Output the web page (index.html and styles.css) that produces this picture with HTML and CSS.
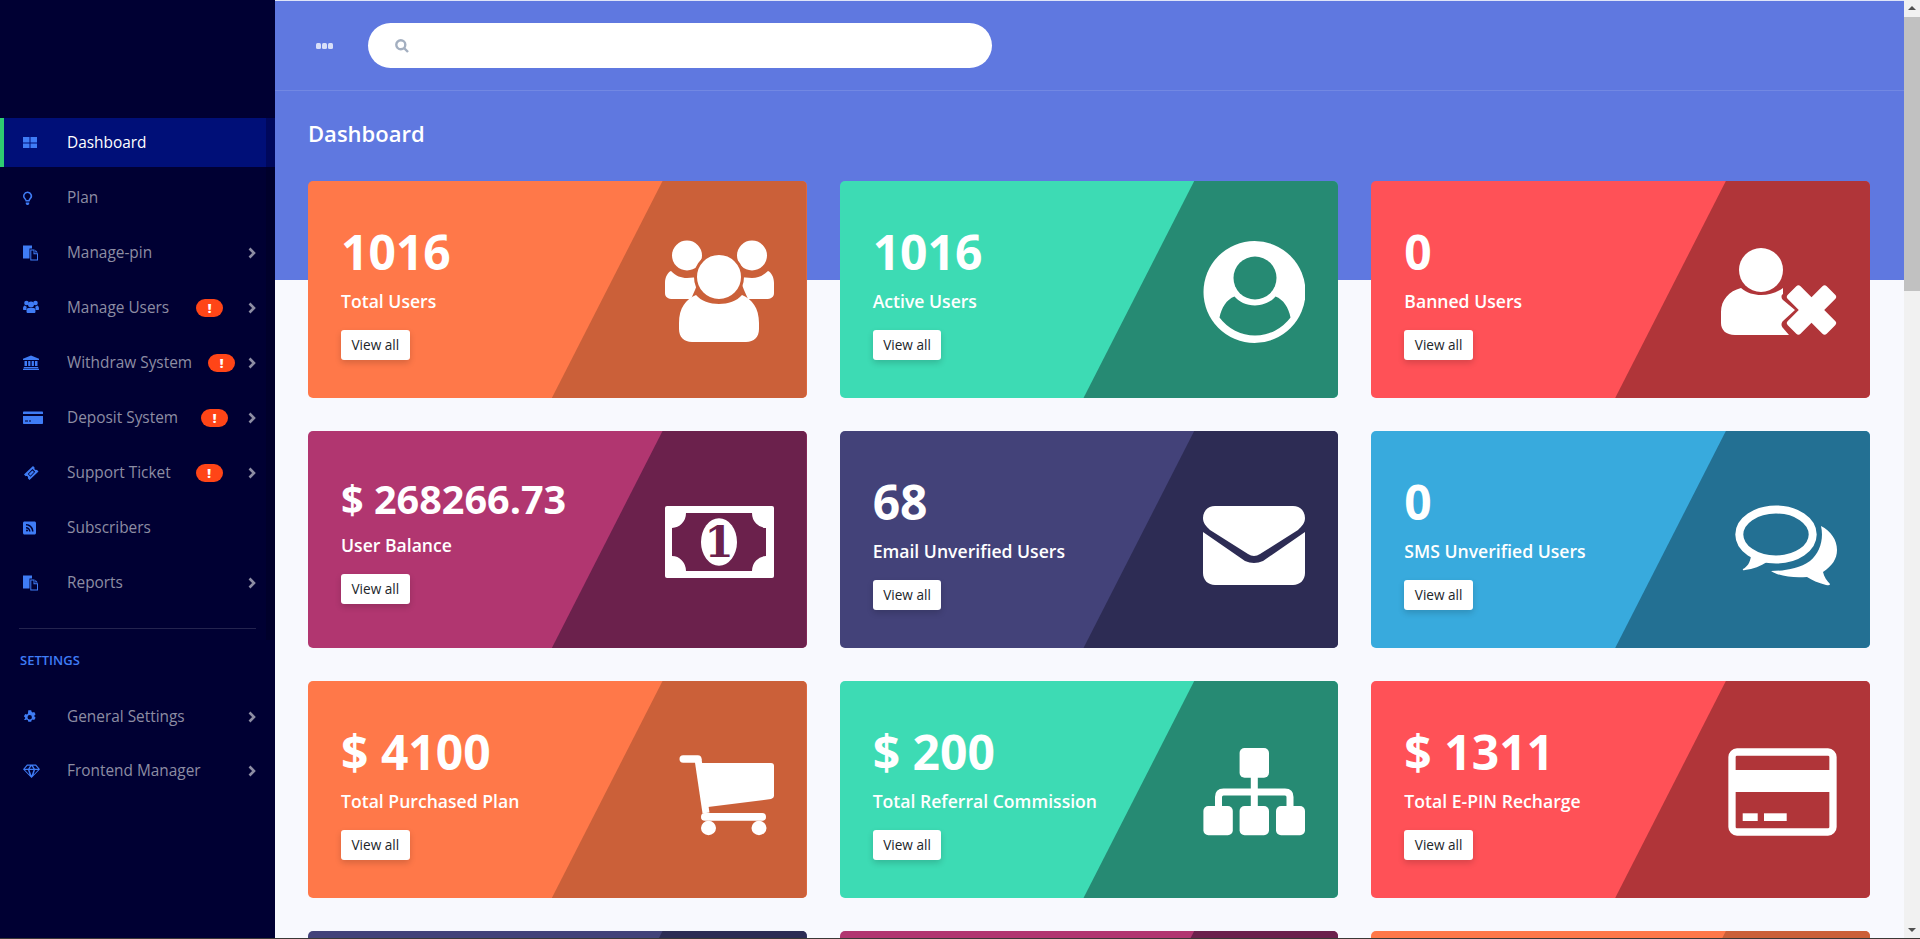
FILE: index.html
```html
<!DOCTYPE html>
<html lang="en">
<head>
  <meta charset="UTF-8" />
  <title>Dashboard</title>
  <meta name="viewport" content="width=device-width, initial-scale=1.0" />
  <link rel="stylesheet" href="styles.css">
</head>
<body>
  <div class="sidebar">
    <div class="menu">
      <a class="menu-item active">
        <svg class="menu-icon" viewBox="0 0 20 20"><path d="M0 4h6.5v5.500H0zM7.500 4H14v5.500H7.500zM0 10.500h6.500V15H0zM7.500 10.500H14V15H7.500z"/></svg>
        <span>Dashboard</span>
      </a>
      <a class="menu-item">
        <svg class="menu-icon" viewBox="0 0 20 20"><path d="M4.500 3.500a4.500 4.500 0 0 0-3.200 7.600c.8.900 1.200 1.700 1.300 2.400h4c.1-.7.500-1.500 1.300-2.400a4.500 4.500 0 0 0-3.400-7.600zm0 1.500a3 3 0 0 1 2.200 5c-.6.700-1 1.300-1.200 2H3.500c-.2-.7-.6-1.300-1.200-2a3 3 0 0 1 2.200-5z"/><path d="M2.800 14.500h3.400v1.200l-.9 1.300H3.700l-.9-1.300z"/></svg>
        <span>Plan</span>
      </a>
      <a class="menu-item">
        <svg class="menu-icon" viewBox="0 0 20 20"><path d="M0 2.500h9v3H6.500v10H0z"/><path d="M7.300 6.500h4.200v3.700h3.500v7.300H7.300zM8.300 7.500v9h5.700v-5.300h-3.500V7.500z"/><path d="M12.300 6.800l2.500 2.600h-2.500z"/></svg>
        <span>Manage-pin</span>
        <svg class="chevron" viewBox="0 0 8 12"><path d="M1.500 1.500L6 6l-4.500 4.500"/></svg>
      </a>
      <a class="menu-item">
        <svg class="menu-icon" viewBox="0 0 20 20"><circle cx="3.500" cy="5" r="2.300"/><circle cx="12.500" cy="5" r="2.300"/><circle cx="8" cy="6.500" r="3"/><path d="M0 11c0-2 .8-3.500 2-3.500.6.500 1 1 1.700 1.200-.3 1-.2 2.300-.2 3.300H1c-.6 0-1-.4-1-1zM16 11c0-2-.8-3.500-2-3.500-.6.500-1 1-1.700 1.200.3 1 .2 2.300.2 3.300H15c.6 0 1-.4 1-1z"/><path d="M5.200 10h5.600c1.200 0 1.700 1.500 1.700 3.500 0 1-.6 1.500-1.500 1.500H5c-.9 0-1.500-.5-1.500-1.500 0-2 .5-3.500 1.700-3.500z"/></svg>
        <span>Manage Users</span>
        <span class="badge badge-users">!</span>
        <svg class="chevron" viewBox="0 0 8 12"><path d="M1.500 1.500L6 6l-4.500 4.500"/></svg>
      </a>
      <a class="menu-item">
        <svg class="menu-icon" viewBox="0 0 20 20"><path d="M8 2.500l8 3.200v1.300H0V5.700z"/><path d="M1.500 8h2.500v5H1.500zM5.200 8h2.200v5H5.200zM8.700 8h2.200v5H8.700zM12 8h2.500v5H12z"/><path d="M.8 14h14.400v1.200H.8zM0 15.700h16v1.300H0z"/></svg>
        <span>Withdraw System</span>
        <span class="badge badge-withdraw">!</span>
        <svg class="chevron" viewBox="0 0 8 12"><path d="M1.500 1.500L6 6l-4.500 4.500"/></svg>
      </a>
      <a class="menu-item">
        <svg class="menu-icon" viewBox="0 0 20 20"><path d="M1 3.500h18c.6 0 1 .4 1 1V6H0V4.500c0-.6.400-1 1-1zM0 8h20v7c0 .6-.4 1-1 1H1c-.6 0-1-.4-1-1zm2 4.500v1h3v-1zm4 0v1h2v-1z" fill-rule="evenodd"/></svg>
        <span>Deposit System</span>
        <span class="badge badge-deposit">!</span>
        <svg class="chevron" viewBox="0 0 8 12"><path d="M1.500 1.500L6 6l-4.500 4.500"/></svg>
      </a>
      <a class="menu-item">
        <svg class="menu-icon" viewBox="0 0 20 20"><path d="M10 3l1.700 1.700c-.4.700-.3 1.400.2 1.900s1.200.6 1.900.2L15.500 8.500 6.500 17l-1.700-1.700c.4-.7.300-1.400-.2-1.900s-1.200-.6-1.900-.2L1 11.500zM9.500 6L4.800 11 7.500 13.700 12.200 8.700z" fill-rule="evenodd"/><path d="M9.400 7.500l1.600 1.600-3.600 3.600-1.600-1.600z"/></svg>
        <span>Support Ticket</span>
        <span class="badge badge-ticket">!</span>
        <svg class="chevron" viewBox="0 0 8 12"><path d="M1.500 1.500L6 6l-4.500 4.500"/></svg>
      </a>
      <a class="menu-item">
        <svg class="menu-icon" viewBox="0 0 20 20"><path fill-rule="evenodd" d="M1.500 3.500h10c.8 0 1.500.7 1.500 1.500v10c0 .8-.7 1.500-1.500 1.500h-10C.7 16.500 0 15.800 0 15V5c0-.8.700-1.500 1.500-1.500zM3 6v1.500c3.300 0 6 2.700 6 6h1.500C10.500 9.300 7.200 6 3 6zm0 3v1.500c1.700 0 3 1.300 3 3h1.500C7.500 11 5.500 9 3 9zm1 2.500a1 1 0 1 0 0 2 1 1 0 0 0 0-2z"/></svg>
        <span>Subscribers</span>
      </a>
      <a class="menu-item">
        <svg class="menu-icon" viewBox="0 0 20 20"><path d="M0 2.500h9v3H6.500v10H0z"/><path d="M7.300 6.500h4.200v3.700h3.500v7.300H7.300zM8.300 7.500v9h5.700v-5.300h-3.500V7.500z"/><path d="M12.300 6.800l2.500 2.600h-2.500z"/></svg>
        <span>Reports</span>
        <svg class="chevron" viewBox="0 0 8 12"><path d="M1.500 1.500L6 6l-4.500 4.500"/></svg>
      </a>
      <div class="menu-divider"></div>
    </div>

    <div class="menu-title">SETTINGS</div>

    <div class="menu menu-settings">
      <a class="menu-item">
        <svg class="menu-icon" viewBox="0 0 20 20"><path fill-rule="evenodd" d="M5.300 3.200h2.900l.4 1.600 1 .6 1.600-.5 1.400 2.400-1.200 1.200v1l1.200 1.200-1.400 2.400-1.600-.5-1 .6-.4 1.600H5.300l-.4-1.600-1-.6-1.600.5L.9 12.700l1.200-1.200v-1L.9 9.300l1.400-2.400 1.600.5 1-.6zM6.700 8a2.200 2.200 0 1 0 0 4.400 2.200 2.200 0 0 0 0-4.400z"/></svg>
        <span>General Settings</span>
        <svg class="chevron" viewBox="0 0 8 12"><path d="M1.500 1.500L6 6l-4.500 4.500"/></svg>
      </a>
      <a class="menu-item">
        <svg class="menu-icon" viewBox="0 0 20 20"><path fill-rule="evenodd" d="M4 3.500h9l4 4.800L8.500 17 0 8.300zM4.500 4.700L1.800 7.800h3.400L7 4.700zM8.500 4.900L6.700 7.800h3.600zM10 4.700l1.800 3.100h3.400l-2.700-3.100zM2 9l4.500 4.800L5 9zM6.500 9l2 5.600L10.500 9zM12 9l-1.500 4.800L15 9z"/></svg>
        <span>Frontend Manager</span>
        <svg class="chevron" viewBox="0 0 8 12"><path d="M1.500 1.500L6 6l-4.500 4.500"/></svg>
      </a>
    </div>
  </div>

  <div class="main">
    <div class="topbar">
      <div class="dots"><i></i><i></i><i></i></div>
      <div class="search">
        <svg class="search-icon" viewBox="0 0 14 14"><circle cx="5.800" cy="5.800" r="4.500"/><path d="M9 9l4 4"/></svg>
      </div>
    </div>

    <div class="content">
      <h1 class="page-title">Dashboard</h1>

      <div class="cards">
        <div class="card orange">
          <div class="card-body">
            <div class="card-num">1016</div>
            <div class="card-label">Total Users</div>
            <a class="view-all">View all</a>
          </div>
          <svg class="card-icon" viewBox="0 0 120 109">
            <circle cx="33" cy="20.500" r="15"/>
            <circle cx="98" cy="20.500" r="15"/>
            <path d="M17 36C22 41 27 43 33 43L46 42L41 55L37 64L19 64C14 64 11 62 11 58L11 48C11 42 14 37 17 36Z"/>
            <path d="M114 36C109 41 104 43 98 43L85 42L90 55L94 64L112 64C117 64 120 62 120 58L120 48C120 42 117 37 114 36Z"/>
            <path d="M42 60C47 66 56 69 65 69C74 69 83 66 88 60C98 64 105 73 105 88L105 94C105 102 100 107 92 107L38 107C30 107 25 102 25 94L25 88C25 73 32 64 42 60Z"/>
            <circle class="cut" cx="65" cy="42" r="23.500"/>
          </svg>
        </div>

        <div class="card green">
          <div class="card-body">
            <div class="card-num">1016</div>
            <div class="card-label">Active Users</div>
            <a class="view-all">View all</a>
          </div>
          <svg class="card-icon" viewBox="0 0 120 109">
            <circle cx="69.500" cy="57" r="51"/>
            <circle class="hole" cx="70" cy="43" r="21.500"/>
            <path class="hole" d="M49.500 61.500C53.500 66.500 61.500 70.500 70 70.500C78.500 70.500 86.500 66.500 90.500 61.500C98.500 64.500 103.500 72.500 105.500 82.500A44 44 0 0 1 34.500 82.500C36.500 72.500 41.500 64.500 49.500 61.500Z"/>
          </svg>
        </div>

        <div class="card red">
          <div class="card-body">
            <div class="card-num">0</div>
            <div class="card-label">Banned Users</div>
            <a class="view-all">View all</a>
          </div>
          <svg class="card-icon" viewBox="0 0 120 109">
            <circle cx="44" cy="35" r="22"/>
            <path d="M24 53C30 58 37 60 44 60C52 60 59 58 66 53L66 59C64 60 64 63 66 65L78 75L66 86C64 88 64 91 66 93L72 100L18 100C9 100 4 95 4 88L4 77C4 65 12 56 24 53Z"/>
            <rect x="67" y="66" width="55" height="18" rx="3" transform="rotate(45 94.500 75)"/>
            <rect x="67" y="66" width="55" height="18" rx="3" transform="rotate(-45 94.500 75)"/>
          </svg>
        </div>

        <div class="card purple">
          <div class="card-body">
            <div class="card-num card-num-small">$ 268266.73</div>
            <div class="card-label">User Balance</div>
            <a class="view-all">View all</a>
          </div>
          <svg class="card-icon" viewBox="0 0 120 109">
            <rect x="11" y="21" width="109" height="72" rx="2"/>
            <path class="hole" d="M32 28H98A14 15 0 0 0 112 43V71A14 15 0 0 0 98 86H32A14 15 0 0 0 18 71V43A14 15 0 0 0 32 28Z"/>
            <ellipse cx="65" cy="57" rx="18" ry="23.700"/>
            <text class="money-one" x="65" y="71.500">1</text>
          </svg>
        </div>

        <div class="card navy">
          <div class="card-body">
            <div class="card-num">68</div>
            <div class="card-label">Email Unverified Users</div>
            <a class="view-all">View all</a>
          </div>
          <svg class="card-icon" viewBox="0 0 120 109">
            <path d="M30 21H108C115 21 120 26 120 33C120 38 117 41 113 45L75 69Q69 73 63 69L25 45C21 41 18 38 18 33C18 26 23 21 30 21Z"/>
            <path d="M18 47L60 76Q69 80 78 76L120 47V88C120 95 115 100 108 100H30C23 100 18 95 18 88Z"/>
          </svg>
        </div>

        <div class="card blue">
          <div class="card-body">
            <div class="card-num">0</div>
            <div class="card-label">SMS Unverified Users</div>
            <a class="view-all">View all</a>
          </div>
          <svg class="card-icon" viewBox="0 0 120 109">
            <ellipse class="ring" cx="59" cy="49.500" rx="36.700" ry="25"/>
            <path d="M34 71C33 78 30 82 26 84Q25 86 28 85C36 84 44 81 50 77L44 72Z"/>
            <path d="M104 41C114 46 120 55 120 65C120 74 115 81 106 87C107 92 110 96 113 99Q113 101 109 100C101 98 95 95 90 92C78 93 63 92 54 86C66 86 82 84 93 76C103 68 107 54 104 41Z"/>
          </svg>
        </div>

        <div class="card orange">
          <div class="card-body">
            <div class="card-num">$ 4100</div>
            <div class="card-label">Total Purchased Plan</div>
            <a class="view-all">View all</a>
          </div>
          <svg class="card-icon" viewBox="0 0 120 109">
            <rect x="25.500" y="20.300" width="22" height="7.500" rx="3.700"/>
            <path d="M44 28H117Q120 28 120 31V61Q120 63 117 64L54 72Z"/>
            <path class="line" d="M44 24L52 78"/>
            <rect x="47" y="78" width="65" height="7.700" rx="3.800"/>
            <ellipse cx="54.500" cy="93" rx="7.500" ry="7.200"/>
            <ellipse cx="105" cy="93" rx="7.500" ry="7.200"/>
          </svg>
        </div>

        <div class="card green">
          <div class="card-body">
            <div class="card-num">$ 200</div>
            <div class="card-label">Total Referral Commission</div>
            <a class="view-all">View all</a>
          </div>
          <svg class="card-icon" viewBox="0 0 120 109">
            <rect x="54.600" y="13" width="29.400" height="29.700" rx="5"/>
            <rect x="18.400" y="71" width="29.400" height="29.300" rx="5"/>
            <rect x="54.600" y="71" width="29.400" height="29.300" rx="5"/>
            <rect x="91" y="71" width="29" height="29.300" rx="5"/>
            <path class="line" d="M33.500 72V62Q33.500 57 38.500 57H100Q105 57 105 62V72M69.300 42V72"/>
          </svg>
        </div>

        <div class="card red">
          <div class="card-body">
            <div class="card-num">$ 1311</div>
            <div class="card-label">Total E-PIN Recharge</div>
            <a class="view-all">View all</a>
          </div>
          <svg class="card-icon" viewBox="0 0 120 109">
            <rect class="ring" x="15" y="17" width="101" height="80" rx="5"/>
            <rect x="18" y="35" width="95" height="22"/>
            <rect x="25.700" y="78.300" width="15" height="7.700"/>
            <rect x="47" y="78.300" width="22.700" height="7.700"/>
          </svg>
        </div>

        <div class="card navy"></div>
        <div class="card purple"></div>
        <div class="card orange"></div>
      </div>
    </div>
  </div>

  <div class="scrollbar">
    <div class="scroll-arrow up"></div>
    <div class="scroll-thumb"></div>
    <div class="scroll-track"></div>
    <div class="scroll-arrow down"></div>
  </div>
</body>
</html>
```
FILE: styles.css
```css
* {
  box-sizing: border-box;
}
html, body {
  height: 100%;
}
body {
  position: relative;
  margin: 0;
  display: flex;
  overflow: hidden;
  background: #f8f9fe;
  font-family: 'Open Sans', sans-serif;
  color: white;
}
/* thin dark edge along the bottom of the window */
body::after {
  content: "";
  position: absolute;
  left: 0;
  right: 0;
  bottom: 0;
  height: 1px;
  background: #3a3836;
}

/* sidebar */
.sidebar {
  flex: 0 0 275px;
  padding-top: 118px;
  background: #000033;
}
.menu {
  display: flex;
  flex-direction: column;
  gap: 6px;
  height: 522px;
  border-right: 9px solid #00002b;
}
.menu-settings {
  gap: 5px;
  height: auto;
  border-right: none;
}
.menu-settings .menu-item {
  padding-right: 19px;
}
.menu-item {
  display: flex;
  align-items: center;
  flex: none;
  height: 49px;
  padding: 0 10px 0 23px;
  color: #8d8da3;
  font-size: 15.4px;
}
.menu-item.active {
  padding-left: 19px;
  border-left: 4px solid #2ecc71;
  background: #000f78;
  box-shadow: 9px 0 0 #00085c;
  color: white;
}
.menu-icon {
  flex: none;
  width: 20px;
  height: 20px;
  margin-right: 24px;
  fill: #3f7cf6;
}
.chevron {
  flex: none;
  width: 8px;
  height: 12px;
  margin-left: auto;
  fill: none;
  stroke: #8d8da3;
  stroke-width: 2.6;
}
.menu-item .badge {
  width: 27px;
  height: 18px;
  border-radius: 10px;
  background: #ff4517;
  color: white;
  font-size: 13px;
  font-weight: 800;
  line-height: 18px;
  text-align: center;
}
.menu-item .badge-users {
  margin-left: 27px;
}
.menu-item .badge-withdraw {
  margin-left: 16px;
}
.menu-item .badge-deposit {
  margin-left: 23px;
}
.menu-item .badge-ticket {
  margin-left: 25px;
}
.menu-divider {
  flex: none;
  height: 1px;
  margin: 15px 10px 0 19px;
  background: #24244f;
}
.menu-title {
  height: 52px;
  padding: 11px 0 0 20px;
  color: #3f7cf6;
  font-size: 13px;
  font-weight: 600;
}

/* main area */
.main {
  flex: 1;
  min-width: 0;
  overflow: hidden;
  border-top: 1px solid #dfe4f8;
  background: linear-gradient(#5f78e0 279px, #f8f9fe 279px);
}
.topbar {
  display: flex;
  align-items: center;
  height: 90px;
  padding-left: 41px;
  border-bottom: 1px solid rgba(255, 255, 255, 0.12);
}
.dots {
  display: flex;
  gap: 1px;
  margin-right: 35px;
}
.dots i {
  width: 5px;
  height: 6px;
  border-radius: 1.5px;
  background: #d8dff8;
}
.search {
  display: flex;
  align-items: center;
  width: 624px;
  height: 45px;
  padding-left: 27px;
  border-radius: 23px;
  background: white;
}
.search-icon {
  width: 14px;
  height: 14px;
  fill: none;
  stroke: #a3afc0;
  stroke-width: 2.4;
}
.content {
  padding: 0 34px 0 33px;
}
.page-title {
  margin: 0;
  padding: 25px 0 31px;
  font-size: 22px;
  font-weight: 600;
  line-height: 34px;
}
.cards {
  display: grid;
  grid-template-columns: repeat(3, 1fr);
  gap: 33px;
}
.card {
  position: relative;
  display: flex;
  align-items: center;
  justify-content: space-between;
  height: 217px;
  padding-right: 33px;
  border-radius: 5px;
  background: var(--light);
  overflow: hidden;
}
.card::before {
  content: "";
  position: absolute;
  inset: 0;
  background: var(--dark);
  clip-path: polygon(71.1% 0, 100% 0, 100% 100%, 48.9% 100%);
}
.orange { --light: #ff7849; --dark: #cb6039; }
.green { --light: #3ddbb4; --dark: #268a73; }
.red { --light: #ff5157; --dark: #b03539; }
.purple { --light: #b13670; --dark: #6b214c; }
.navy { --light: #434279; --dark: #2d2c54; }
.blue { --light: #38aadd; --dark: #237093; }

.card-body {
  position: relative;
  align-self: flex-start;
  padding: 38px 0 0 33px;
}
.card-num {
  font-size: 48px;
  font-weight: 700;
  line-height: 66px;
}
.card-num-small {
  font-size: 39.6px;
  line-height: 60px;
}
.card-label {
  margin-top: 1px;
  font-size: 17.6px;
  font-weight: 600;
  line-height: 30px;
}
.view-all {
  display: inline-block;
  margin-top: 14px;
  padding: 0 10.5px;
  border-radius: 3px;
  background: white;
  box-shadow: 0 3px 6px rgba(0, 0, 0, 0.16);
  color: #212529;
  font-size: 13.6px;
  line-height: 30px;
}
.card-icon {
  position: relative;
  flex: none;
  width: 120px;
  height: 109px;
  fill: white;
}
.card-icon .cut {
  stroke: var(--dark);
  stroke-width: 3;
}
.card-icon .hole {
  fill: var(--dark);
}
.card-icon .ring {
  fill: none;
  stroke: white;
  stroke-width: 8;
}
.card-icon rect.ring {
  stroke-width: 7.3;
}
.card-icon .line {
  fill: none;
  stroke: white;
  stroke-width: 7;
}
.money-one {
  fill: var(--dark);
  font-family: 'DejaVu Serif', serif;
  font-size: 42px;
  font-weight: 700;
  text-anchor: middle;
}

/* page scrollbar */
.scrollbar {
  flex: 0 0 16px;
  display: flex;
  flex-direction: column;
  background: #f1f1f1;
}
.scroll-arrow {
  flex: none;
  height: 17px;
}
.scroll-arrow.up::after,
.scroll-arrow.down::after {
  content: "";
  display: block;
  width: 0;
  margin: 6px auto 0;
  border-left: 4px solid transparent;
  border-right: 4px solid transparent;
}
.scroll-arrow.up::after {
  border-bottom: 4px solid #505050;
}
.scroll-arrow.down::after {
  border-top: 4px solid #505050;
}
.scroll-thumb {
  flex: none;
  height: 274px;
  background: #c1c1c1;
}
.scroll-track {
  flex: 1;
}
```
